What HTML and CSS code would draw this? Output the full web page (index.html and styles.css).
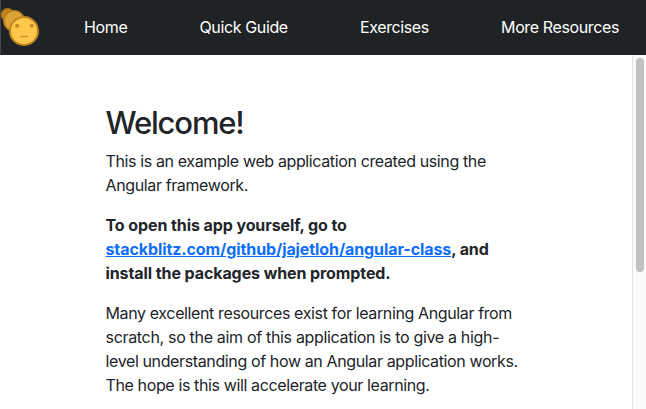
FILE: index.html
```html
<!DOCTYPE html>
<html lang="en">
<head>
<meta charset="utf-8">
<title>Angular Class</title>
<link rel="stylesheet" href="styles.css">
</head>
<body>
<header class="navbar">
  <svg class="logo" width="40" height="46" viewBox="0 0 40 46" aria-hidden="true">
    <circle cx="7.5" cy="14.8" r="6.2" fill="#bd8420" stroke="#ad7412" stroke-width="1.2"/>
    <circle cx="14" cy="20.8" r="10.1" fill="#dda438" stroke="#b9801d" stroke-width="1.6"/>
    <circle cx="24" cy="31" r="14" fill="#ffc84a" stroke="#bf851d" stroke-width="2"/>
    <circle cx="17.2" cy="25.8" r="2" fill="#bf8b2b"/>
    <circle cx="31.8" cy="25.8" r="2" fill="#bf8b2b"/>
    <path d="M20.5 36.5h7.5" stroke="#bf8b2b" stroke-width="1.3"/>
  </svg>
  <nav class="links">
    <a>Home</a>
    <a>Quick Guide</a>
    <a>Exercises</a>
    <a>More Resources</a>
  </nav>
</header>
<div class="viewport">
  <main class="content">
    <h1>Welcome!</h1>
    <p>This is an example web application created using the<br>Angular framework.</p>
    <p class="strong">To open this app yourself, go to<br><a class="link">stackblitz.com/github/jajetloh/angular-class</a>, and<br>install the packages when prompted.</p>
    <p>Many excellent resources exist for learning Angular from<br><span class="loose">scratch, so the aim of this application is to give a high-</span><br>level understanding of how an Angular application works.<br>The hope is this will accelerate your learning.</p>
  </main>
  <div class="scrollbar"><div class="thumb"></div></div>
</div>
</body>
</html>
```
FILE: styles.css
```css
* { box-sizing: border-box; }
body {
  margin: 0;
  height: 409px;
  overflow: hidden;
  display: flex;
  flex-direction: column;
  background: #fff;
  color: #212529;
  font: 16px/24px Inter, "Liberation Sans", sans-serif;
  letter-spacing: -0.375px;
}
.navbar {
  flex: none;
  display: flex;
  height: 55px;
  background: #1f2326;
  border-left: 1px solid #42484c;
}
.logo { flex: none; display: block; margin-left: -1px; }
.links {
  flex: 1;
  display: flex;
  justify-content: space-between;
  align-items: center;
  padding: 0 27px 2px 44px;
  color: #fff;
  white-space: nowrap;
}
.viewport { flex: 1; min-height: 0; display: flex; }
.content { flex: 1; padding: 49px 0 0 105.5px; white-space: nowrap; }
h1 {
  margin: 0 0 7px;
  font-size: 31px;
  line-height: 38px;
  font-weight: 550;
  letter-spacing: -1.15px;
}
p { margin: 0 0 16px; }
.strong { font-weight: 700; letter-spacing: -0.09px; }
.loose { letter-spacing: -0.32px; }
.link { color: #0d6efd; text-decoration: underline; }
.scrollbar {
  flex: none;
  width: 14px;
  padding: 3px 2px 0 3px;
  background: #fafafa;
  border-left: 1px solid #e2e2e2;
}
.thumb { width: 8px; height: 214px; border-radius: 4px; background: #c1c1c1; }
```
